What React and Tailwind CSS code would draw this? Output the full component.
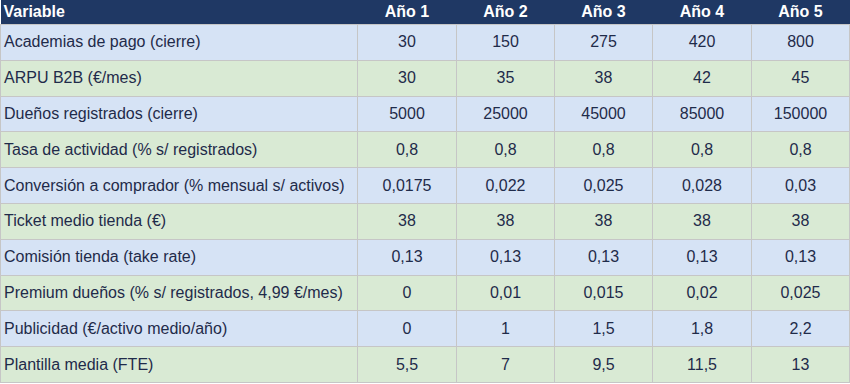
import React from "react";

const years = ["Año 1", "Año 2", "Año 3", "Año 4", "Año 5"];

const rows = [
  ["Academias de pago (cierre)", "30", "150", "275", "420", "800"],
  ["ARPU B2B (€/mes)", "30", "35", "38", "42", "45"],
  ["Dueños registrados (cierre)", "5000", "25000", "45000", "85000", "150000"],
  ["Tasa de actividad (% s/ registrados)", "0,8", "0,8", "0,8", "0,8", "0,8"],
  ["Conversión a comprador (% mensual s/ activos)", "0,0175", "0,022", "0,025", "0,028", "0,03"],
  ["Ticket medio tienda (€)", "38", "38", "38", "38", "38"],
  ["Comisión tienda (take rate)", "0,13", "0,13", "0,13", "0,13", "0,13"],
  ["Premium dueños (% s/ registrados, 4,99 €/mes)", "0", "0,01", "0,015", "0,02", "0,025"],
  ["Publicidad (€/activo medio/año)", "0", "1", "1,5", "1,8", "2,2"],
  ["Plantilla media (FTE)", "5,5", "7", "9,5", "11,5", "13"],
];

export default function App() {
  return (
    <div className="w-[850px] h-[384px] bg-white font-['Liberation_Sans',Arial,sans-serif]">
      <table className="w-[849px] table-fixed border-collapse">
        <colgroup>
          <col className="w-[357px]" />
          <col className="w-[99px]" />
          <col className="w-[98px]" />
          <col className="w-[98px]" />
          <col className="w-[99px]" />
          <col className="w-[98px]" />
        </colgroup>
        <thead>
          <tr className="h-[24px] bg-[#1f3864] text-white text-[16px] font-bold">
            <th className="text-left pl-[3px] border-b border-[#c6c6c6]">Variable</th>
            {years.map((y) => (
              <th key={y} className="text-center border-b border-[#c6c6c6]">{y}</th>
            ))}
          </tr>
        </thead>
        <tbody>
          {rows.map((r, i) => (
            <tr
              key={i}
              className={`h-[35.8px] text-[16px] text-[#1f2b4a] ${i % 2 === 0 ? "bg-[#d6e3f5]" : "bg-[#d9ead4]"}`}
            >
              {r.map((c, j) => (
                <td
                  key={j}
                  className={`border border-[#c6c6c6] ${j === 0 ? "text-left pl-[3px]" : "text-center"}`}
                >
                  {c}
                </td>
              ))}
            </tr>
          ))}
        </tbody>
      </table>
    </div>
  );
}
